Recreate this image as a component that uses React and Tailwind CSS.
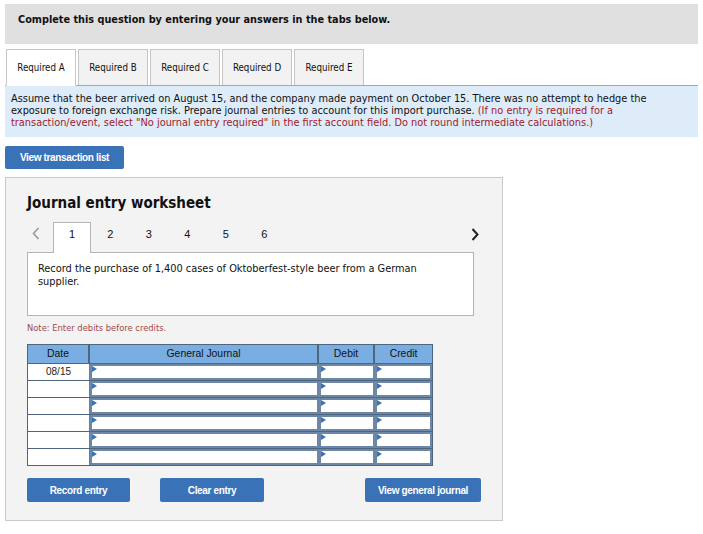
import React from "react";

const V = { fontFamily: '"DejaVu Sans Condensed", "DejaVu Sans", Verdana, sans-serif' };
const A = { fontFamily: '"Liberation Sans", Arial, sans-serif' };

function Btn({ children, className }) {
  return (
    <div
      style={A}
      className={`flex shrink-0 items-center justify-center rounded-[2px] bg-[#3a72b8] text-[10px] font-bold text-white tracking-[-0.35px] ${className}`}
    >
      {children}
    </div>
  );
}

function InputCell() {
  return (
    <div className="relative h-full border-2 border-[#6d88a6] bg-white">
      <span className="absolute left-0 top-0 h-0 w-0 border-y-[3px] border-l-[5px] border-y-transparent border-l-[#3a72b8]" />
    </div>
  );
}

export default function App() {
  const tabs = ["Required A", "Required B", "Required C", "Required D", "Required E"];
  const rows = ["08/15", "", "", "", "", ""];
  return (
    <div className="min-h-[534px] w-[703px] bg-white pt-[4px] text-[#111]" style={V}>
      <div className="mx-[5px] h-[40px] bg-[#e0e0e0] pl-[13px] pt-[9px] text-[10.8px] font-bold leading-[14px]">
        Complete this question by entering your answers in the tabs below.
      </div>

      <div className="mx-[5px] mt-[5px] flex items-end border-b border-[#a8a8a8]">
        {tabs.map((t, i) => (
          <div
            key={t}
            className={`flex items-center justify-center border border-[#c6c6c6] pt-[2px] text-[9.7px] ${
              i === 0
                ? "-mb-px ml-[1px] h-[37px] w-[70px] border-b-white bg-white"
                : "ml-[2px] h-[36px] w-[70px] border-b-0 bg-[#f2f2f2]"
            }`}
          >
            {t}
          </div>
        ))}
      </div>

      <div className="mx-[5px] h-[51px] bg-[#ddecf8] px-[6px] pt-[7px] text-[10.9px] leading-[12px] whitespace-nowrap">
        Assume that the beer arrived on August 15, and the company made payment on October 15. There was no attempt to hedge the
        <br />
        exposure to foreign exchange risk. Prepare journal entries to account for this import purchase.{" "}
        <span className="text-[#a3202a]">
          (If no entry is required for a
          <br />
          transaction/event, select "No journal entry required" in the first account field. Do not round intermediate calculations.)
        </span>
      </div>

      <Btn className="ml-[5px] mt-[9px] h-[23px] w-[119px]">View transaction list</Btn>

      <div className="ml-[5px] mt-[8px] h-[344px] w-[498px] border border-[#c9c9c9] bg-[#f3f3f3] pl-[21px] pr-[20px]">
        <div className="mt-[15px] text-[15px] font-bold leading-[20px]">Journal entry worksheet</div>

        <div className="mt-[9px] flex h-[30px] w-[447px] items-start">
          <svg width="8" height="13" viewBox="0 0 8 13" className="ml-[5px] mr-[13px] mt-[5px]">
            <polyline points="6.5,1 1.5,6.5 6.5,12" fill="none" stroke="#9a9a9a" strokeWidth="1.6" />
          </svg>
          <div
            className="-mb-px flex h-[31px] w-[38px] justify-center border border-b-0 border-[#b4b4b4] bg-white pt-[3px] text-[11px]"
            style={A}
          >
            1
          </div>
          {["2", "3", "4", "5", "6"].map((n) => (
            <div key={n} className="flex w-[38.5px] justify-center pt-[4px] text-[11px]" style={A}>
              {n}
            </div>
          ))}
          <svg width="8" height="13" viewBox="0 0 8 13" className="ml-auto mr-[-5px] mt-[6px]">
            <polyline points="1.5,1 6.5,6.5 1.5,12" fill="none" stroke="#222" strokeWidth="2" />
          </svg>
        </div>

        <div className="h-[64px] w-[447px] border border-[#b4b4b4] bg-white px-[10px] pt-[9px] text-[10.9px] leading-[13px]">
          Record the purchase of 1,400 cases of Oktoberfest-style beer from a German
          <br />
          supplier.
        </div>

        <div className="mt-[6px] text-[9.3px] leading-[12px] text-[#a04a4a]">Note: Enter debits before credits.</div>

        <div className="mt-[10px] w-[406px] border border-[#50667f]" style={A}>
          <div className="grid h-[18px] grid-cols-[62px_229px_56px_57px] bg-[#7aaee2] text-[10.4px] leading-[18px] text-[#111]">
            <div className="border-r-2 border-[#50667f] text-center">Date</div>
            <div className="border-r-2 border-[#50667f] text-center">General Journal</div>
            <div className="border-r-2 border-[#50667f] text-center">Debit</div>
            <div className="text-center">Credit</div>
          </div>
          {rows.map((d, i) => (
            <div key={i} className="grid h-[17px] grid-cols-[62px_229px_56px_57px] border-t border-[#50667f] bg-white">
              <div className="border-r border-[#7a7a7a] text-center text-[10px] leading-[16px] text-[#222]">{d}</div>
              <InputCell />
              <InputCell />
              <InputCell />
            </div>
          ))}
        </div>

        <div className="mt-[12px] flex h-[24px]">
          <Btn className="h-[24px] w-[103px]">Record entry</Btn>
          <Btn className="ml-[30px] h-[24px] w-[104px]">Clear entry</Btn>
          <Btn className="ml-[101px] h-[24px] w-[116px]">View general journal</Btn>
        </div>
      </div>
    </div>
  );
}
